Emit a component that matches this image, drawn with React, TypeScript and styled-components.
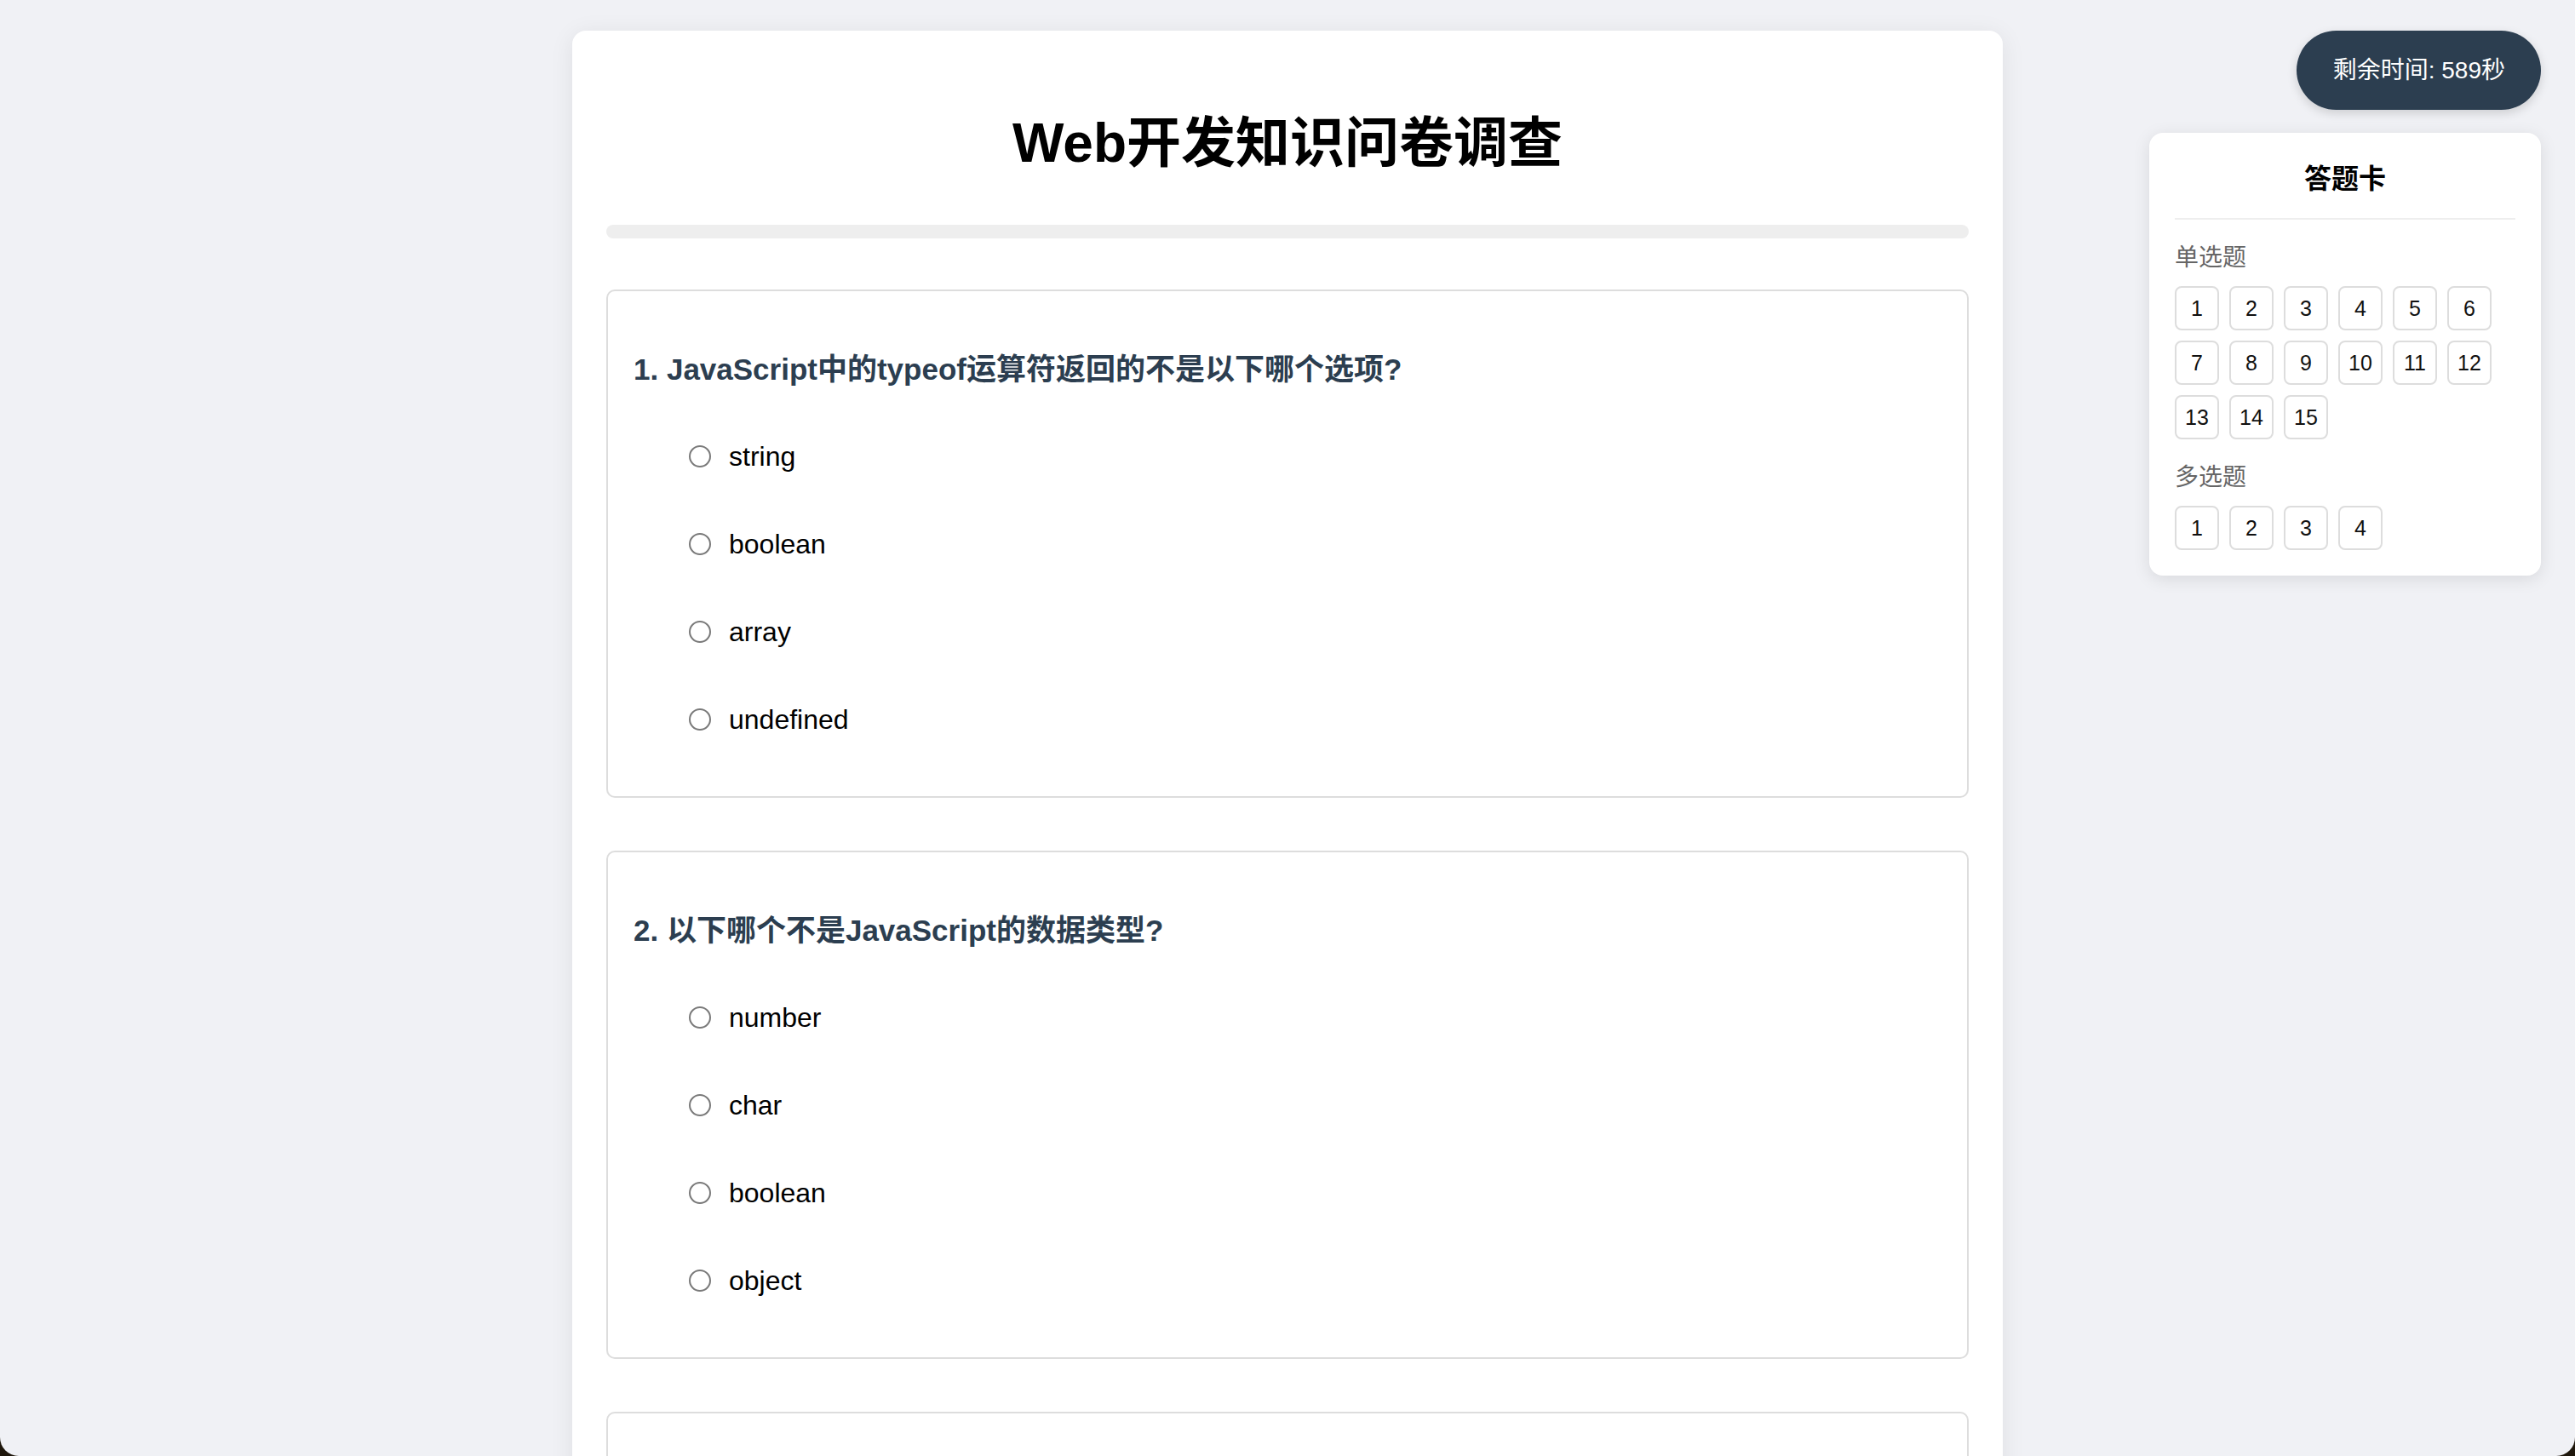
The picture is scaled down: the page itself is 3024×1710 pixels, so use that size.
import React from "react";
import styled, { createGlobalStyle } from "styled-components";

const GlobalStyle = createGlobalStyle`
  html {
    background: #1f170c;
  }
  html, body {
    margin: 0;
    padding: 0;
  }
  body {
    height: 100vh;
    overflow: hidden;
    background: #f0f1f5;
    border-radius: 0 0 22px 22px;
    font-family: "Liberation Sans", "Noto Sans CJK SC", Arial, sans-serif;
    color: #000;
  }
  * { box-sizing: border-box; }
`;

const Page = styled.div`
  display: grid;
  grid-template-columns: 1fr 1680px 1fr;
  padding-top: 36px;
`;

const Spacer = styled.div``;

const MainCard = styled.main`
  background: #fff;
  border-radius: 16px;
  box-shadow: 0 4px 28px rgba(0, 0, 0, 0.08);
  padding: 40px 40px 60px;
  min-height: 2400px;
`;

const Title = styled.h1`
  margin: 55px 0 0;
  font-size: 64px;
  line-height: 74px;
  font-weight: 700;
  text-align: center;
  color: #000;
`;

const Progress = styled.div`
  margin-top: 59px;
  height: 16px;
  border-radius: 8px;
  background: #eeeeee;
  overflow: hidden;
`;

const ProgressFill = styled.div`
  height: 100%;
  background: #2c3e50;
`;

const QuestionList = styled.div`
  margin-top: 60px;
  display: flex;
  flex-direction: column;
  gap: 62px;
`;

const QuestionCard = styled.section`
  border: 2px solid #dddddd;
  border-radius: 10px;
  padding: 30px;
`;

const QuestionTitle = styled.h3`
  margin: 42px 0 0;
  font-size: 35px;
  line-height: 40px;
  font-weight: 700;
  color: #2c3e50;
`;

const Options = styled.div`
  margin: 52px 0 30px;
  display: flex;
  flex-direction: column;
  gap: 43px;
`;

const OptionRow = styled.label`
  display: flex;
  align-items: center;
  height: 60px;
  padding-left: 65px;
  gap: 21px;
  font-size: 32px;
  color: #000;
  cursor: pointer;
`;

const Radio = styled.span`
  width: 26px;
  height: 26px;
  border-radius: 50%;
  border: 2px solid #7a7a7a;
  background: #fff;
  flex-shrink: 0;
`;

const Side = styled.aside`
  display: flex;
  flex-direction: column;
  align-items: flex-end;
  padding-right: 40px;
  gap: 27px;
`;

const Timer = styled.div`
  height: 93px;
  line-height: 93px;
  padding: 0 42px 0 43px;
  border-radius: 47px;
  background: #2c3e50;
  color: #fff;
  font-size: 28px;
  box-shadow: 0 4px 12px rgba(0, 0, 0, 0.15);
  white-space: nowrap;
`;

const AnswerCard = styled.div`
  width: 460px;
  background: #fff;
  border-radius: 16px;
  box-shadow: 0 4px 20px rgba(0, 0, 0, 0.1);
  padding: 30px;
`;

const CardTitle = styled.div`
  font-size: 32px;
  line-height: 48px;
  font-weight: 700;
  text-align: center;
  padding-bottom: 22px;
  border-bottom: 2px solid #eeeeee;
`;

const Group = styled.div`
  margin-top: 24px;
`;

const GroupLabel = styled.div`
  font-size: 28px;
  line-height: 42px;
  color: #666;
  margin-bottom: 12px;
`;

const NumGrid = styled.div`
  display: flex;
  flex-wrap: wrap;
  gap: 12px;
`;

const NumButton = styled.button`
  width: 52px;
  height: 52px;
  border: 2px solid #dddddd;
  border-radius: 8px;
  background: #fff;
  color: #111;
  font-family: "Liberation Sans", Arial, sans-serif;
  font-size: 25px;
  padding: 0;
  display: flex;
  align-items: center;
  justify-content: center;
  cursor: pointer;
`;

const questions = [
  {
    title: "1. JavaScript中的typeof运算符返回的不是以下哪个选项?",
    options: ["string", "boolean", "array", "undefined"],
  },
  {
    title: "2. 以下哪个不是JavaScript的数据类型?",
    options: ["number", "char", "boolean", "object"],
  },
  {
    title: "3. 以下哪个方法可以阻止事件冒泡?",
    options: ["preventDefault()", "stopPropagation()", "return false", "cancelBubble()"],
  },
];

const single = Array.from({ length: 15 }, (_, i) => i + 1);
const multi = [1, 2, 3, 4];

export default function App() {
  return (
    <>
      <GlobalStyle />
      <Page>
        <Spacer />
        <MainCard>
          <Title>Web开发知识问卷调查</Title>
          <Progress>
            <ProgressFill style={{ width: "0%" }} />
          </Progress>
          <QuestionList>
            {questions.map((q) => (
              <QuestionCard key={q.title}>
                <QuestionTitle>{q.title}</QuestionTitle>
                <Options>
                  {q.options.map((o) => (
                    <OptionRow key={o}>
                      <Radio />
                      {o}
                    </OptionRow>
                  ))}
                </Options>
              </QuestionCard>
            ))}
          </QuestionList>
        </MainCard>
        <Side>
          <Timer>剩余时间: 589秒</Timer>
          <AnswerCard>
            <CardTitle>答题卡</CardTitle>
            <Group>
              <GroupLabel>单选题</GroupLabel>
              <NumGrid>
                {single.map((n) => (
                  <NumButton key={n}>{n}</NumButton>
                ))}
              </NumGrid>
            </Group>
            <Group>
              <GroupLabel>多选题</GroupLabel>
              <NumGrid>
                {multi.map((n) => (
                  <NumButton key={n}>{n}</NumButton>
                ))}
              </NumGrid>
            </Group>
          </AnswerCard>
        </Side>
      </Page>
    </>
  );
}
